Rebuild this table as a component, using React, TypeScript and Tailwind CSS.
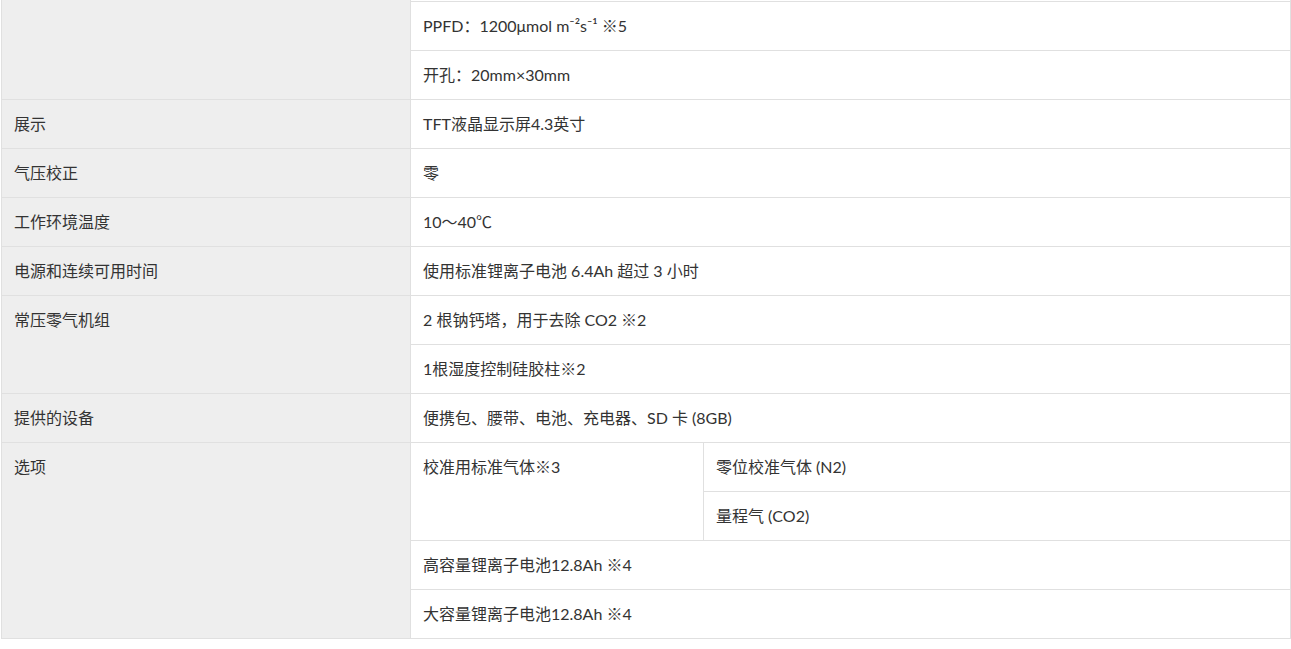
const font = { fontFamily: 'Lato, "Noto Sans CJK SC", sans-serif' };

type Group = { label: string; items: React.ReactNode[] };

const groups: Group[] = [
  { label: "展示", items: ["TFT液晶显示屏4.3英寸"] },
  { label: "气压校正", items: ["零"] },
  { label: "工作环境温度", items: ["10～40℃"] },
  { label: "电源和连续可用时间", items: ["使用标准锂离子电池 6.4Ah 超过 3 小时"] },
  { label: "常压零气机组", items: ["2 根钠钙塔，用于去除 CO2 ※2", "1根湿度控制硅胶柱※2"] },
  { label: "提供的设备", items: ["便携包、腰带、电池、充电器、SD 卡 (8GB)"] },
];

function Cell({ children, last }: { children: React.ReactNode; last?: boolean }) {
  return (
    <div className={`px-3 py-3 leading-6 ${last ? "h-12" : "h-[49px] border-b border-[#e0e0e0]"}`}>
      {children}
    </div>
  );
}

function Row({ label, items, top }: { label: string; items: React.ReactNode[]; top?: boolean }) {
  return (
    <div className="flex border-b border-[#e0e0e0]">
      <div className="w-[409px] shrink-0 border-r border-[#e0e0e0] bg-[#eeeeee] px-3 py-3 leading-6">{label}</div>
      <div className={`flex-1 bg-white ${top ? "pt-px" : ""}`}>
        {top && <div className="border-t border-[#e0e0e0]" />}
        {items.map((it, i) => (
          <Cell key={i} last={i === items.length - 1}>
            {it}
          </Cell>
        ))}
      </div>
    </div>
  );
}

export default function App() {
  return (
    <div className="min-h-screen bg-white" style={font}>
      <div className="ml-px w-[1290px] border-x border-[#e0e0e0] text-base text-[#333333]">
        <Row
          label=""
          top
          items={[
            <span>PPFD：1200μmol m⁻²s⁻¹ ※5</span>,
            <span>开孔：20mm×30mm</span>,
          ]}
        />
        {groups.map((g) => (
          <Row key={g.label} label={g.label} items={g.items} />
        ))}
        <div className="flex border-b border-[#e0e0e0]">
          <div className="w-[409px] shrink-0 border-r border-[#e0e0e0] bg-[#eeeeee] px-3 py-3 leading-6">选项</div>
          <div className="flex-1 bg-white">
            <div className="flex border-b border-[#e0e0e0]">
              <div className="w-[293px] shrink-0 border-r border-[#e0e0e0] px-3 py-3 leading-6">校准用标准气体※3</div>
              <div className="flex-1">
                <Cell>零位校准气体 (N2)</Cell>
                <Cell last>量程气 (CO2)</Cell>
              </div>
            </div>
            <Cell>高容量锂离子电池12.8Ah ※4</Cell>
            <Cell last>大容量锂离子电池12.8Ah ※4</Cell>
          </div>
        </div>
      </div>
    </div>
  );
}
